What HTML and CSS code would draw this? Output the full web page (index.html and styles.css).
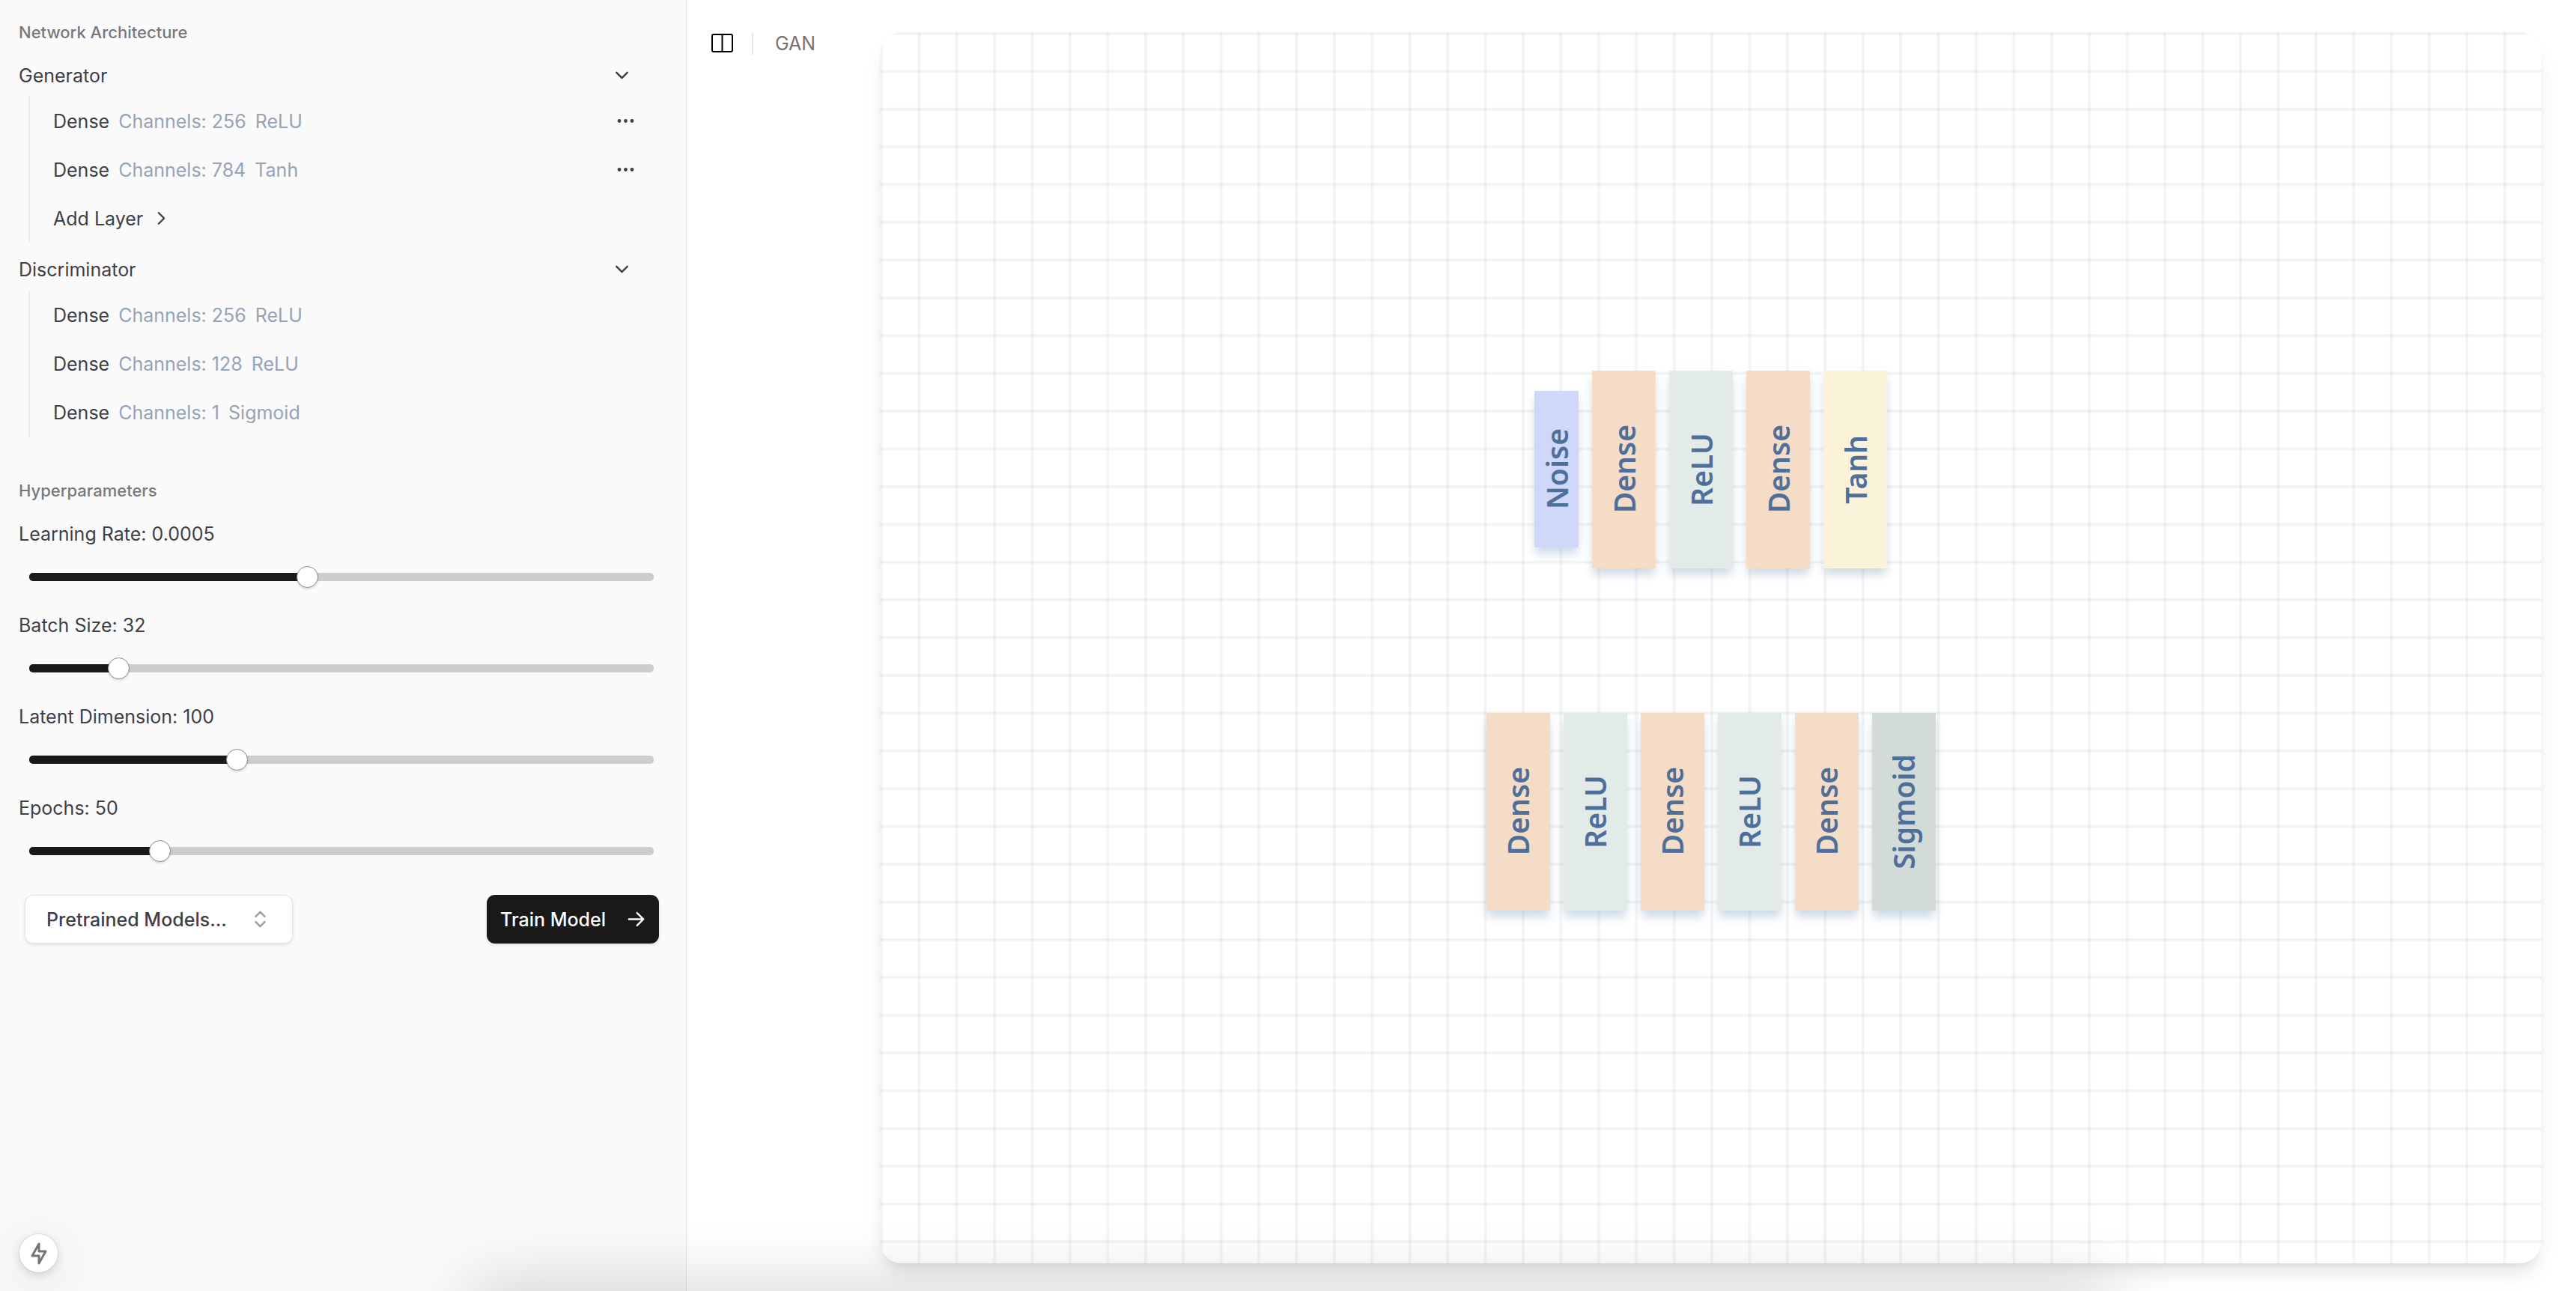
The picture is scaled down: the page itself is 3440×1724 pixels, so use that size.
FILE: index.html
```
<!DOCTYPE html>
<html lang="en">
<head>
<meta charset="utf-8">
<title>GAN</title>
<link rel="stylesheet" href="styles.css">
</head>
<body>
<div class="app">
  <aside class="sidebar">
    <section>
      <h2 class="group-title">Network Architecture</h2>
      <button class="tree-head" type="button">Generator
        <svg class="icon" viewBox="0 0 24 24"><path d="m6 9 6 6 6-6"/></svg>
      </button>
      <ul class="tree">
        <li class="layer"><span>Dense</span><span class="meta">Channels: 256</span><span class="meta">ReLU</span>
          <button class="more" type="button" aria-label="Layer options"><svg class="icon" viewBox="0 0 24 24"><circle cx="5" cy="12" r="1"/><circle cx="12" cy="12" r="1"/><circle cx="19" cy="12" r="1"/></svg></button></li>
        <li class="layer"><span>Dense</span><span class="meta">Channels: 784</span><span class="meta">Tanh</span>
          <button class="more" type="button" aria-label="Layer options"><svg class="icon" viewBox="0 0 24 24"><circle cx="5" cy="12" r="1"/><circle cx="12" cy="12" r="1"/><circle cx="19" cy="12" r="1"/></svg></button></li>
        <li class="layer"><button class="add" type="button">Add Layer
          <svg class="icon" viewBox="0 0 24 24"><path d="m9 18 6-6-6-6"/></svg></button></li>
      </ul>
      <button class="tree-head" type="button">Discriminator
        <svg class="icon" viewBox="0 0 24 24"><path d="m6 9 6 6 6-6"/></svg>
      </button>
      <ul class="tree">
        <li class="layer"><span>Dense</span><span class="meta">Channels: 256</span><span class="meta">ReLU</span></li>
        <li class="layer"><span>Dense</span><span class="meta">Channels: 128</span><span class="meta">ReLU</span></li>
        <li class="layer"><span>Dense</span><span class="meta">Channels: 1</span><span class="meta">Sigmoid</span></li>
      </ul>
    </section>
    <section class="params">
      <h2 class="group-title">Hyperparameters</h2>
      <div class="param">
        <label for="lr">Learning Rate: 0.0005</label>
        <input class="slider" id="lr" type="range" min="0" max="1000" value="443" style="--fill:44.3%">
      </div>
      <div class="param">
        <label for="batch">Batch Size: 32</label>
        <input class="slider" id="batch" type="range" min="0" max="1000" value="130" style="--fill:13%">
      </div>
      <div class="param">
        <label for="latent">Latent Dimension: 100</label>
        <input class="slider" id="latent" type="range" min="0" max="1000" value="327" style="--fill:32.7%">
      </div>
      <div class="param">
        <label for="epochs">Epochs: 50</label>
        <input class="slider" id="epochs" type="range" min="0" max="1000" value="199" style="--fill:19.9%">
      </div>
    </section>
    <div class="actions">
      <button class="models" type="button" aria-haspopup="listbox">Pretrained Models...
        <svg class="icon" viewBox="0 0 24 24"><path d="m7 15 5 5 5-5M7 9l5-5 5 5"/></svg>
      </button>
      <button class="train" type="button">Train Model
        <svg class="icon" viewBox="0 0 24 24"><path d="M4 12h16M13 5l7 7-7 7"/></svg>
      </button>
    </div>
  </aside>
  <main class="main">
    <header class="topbar">
      <button class="toggle" type="button" aria-label="Toggle sidebar">
        <svg viewBox="0 0 29 26"><rect x="1" y="1" width="27" height="23" rx="2"/><path d="M14.500 1v23"/></svg>
      </button>
      <span class="divider"></span>
      <span class="crumb">GAN</span>
    </header>
    <div class="canvas">
      <svg class="grid" viewBox="0 0 1233 913" preserveAspectRatio="xMinYMin slice" aria-hidden="true">
        <defs><pattern id="cell" width="28" height="28" patternUnits="userSpaceOnUse"><path class="grid-line" d="M0 0h28v2H0z"/><path class="grid-line" d="M0 0h2v28H0z"/></pattern></defs>
        <rect width="1233" height="1800" fill="url(#cell)"/>
      </svg>
      <div class="net">
        <div class="node noise"><span>Noise</span></div>
        <div class="node dense"><span>Dense</span></div>
        <div class="node relu"><span>ReLU</span></div>
        <div class="node dense"><span>Dense</span></div>
        <div class="node tanh"><span>Tanh</span></div>
      </div>
      <div class="net">
        <div class="node dense"><span>Dense</span></div>
        <div class="node relu"><span>ReLU</span></div>
        <div class="node dense"><span>Dense</span></div>
        <div class="node relu"><span>ReLU</span></div>
        <div class="node dense"><span>Dense</span></div>
        <div class="node sigmoid"><span>Sigmoid</span></div>
      </div>
    </div>
  </main>
</div>
<div class="dock-shadow"></div>
<button class="fab" type="button" aria-label="Quick actions">
  <svg viewBox="0 0 22 30"><path d="M11 2v10h9L11 28V18H2z"/></svg>
</button>
</body>
</html>
```
FILE: styles.css
```
* { box-sizing: border-box; }
body {
  margin: 0;
  font-family: Inter, "Liberation Sans", sans-serif;
  font-size: 25px;
  line-height: 36px;
  color: #3f3f46;
  background: #fff;
}
button {
  font: inherit;
  color: inherit;
  background: none;
  border: 0;
  padding: 0;
}
.app { display: flex; height: 100vh; overflow: hidden; }
.icon {
  width: 29px;
  height: 29px;
  flex: none;
  fill: none;
  stroke: currentColor;
  stroke-width: 2;
  stroke-linecap: round;
  stroke-linejoin: round;
}

.sidebar {
  flex: none;
  width: 917px;
  padding: 14px 36px 0 25px;
  background: #fafafa;
  border-right: 1px solid #e4e4e4;
}
.group-title {
  margin: 0;
  font-size: 22px;
  line-height: 58px;
  font-weight: 500;
  color: #78787c;
}
.tree-head {
  display: flex;
  width: 100%;
  height: 57px;
  padding-right: 35px;
  align-items: center;
  justify-content: space-between;
}
.tree {
  list-style: none;
  margin: 0 0 7px 13px;
  padding: 0 0 0 31px;
  border-left: 2px solid #ebebeb;
}
.layer {
  display: flex;
  align-items: center;
  gap: 12px;
  height: 65px;
}
.meta { color: #94a3b8; }
.more { display: flex; margin-left: auto; padding-right: 30px; }
.add { display: flex; align-items: center; gap: 10px; }

.params { padding-top: 36px; }
.param { height: 122px; padding-top: 11px; }
.param label { display: block; }
.slider {
  -webkit-appearance: none;
  appearance: none;
  display: block;
  width: 834px;
  height: 29px;
  margin: 25px 0 0 14px;
  background: none;
}
.slider::-webkit-slider-runnable-track {
  height: 11px;
  border-radius: 5px;
  background: linear-gradient(#1a1917, #1a1917) 0 0 / var(--fill) 100% no-repeat, #cdcdcd;
}
.slider::-webkit-slider-thumb {
  -webkit-appearance: none;
  width: 29px;
  height: 29px;
  margin-top: -9px;
  border: 1px solid #8b8b8b;
  border-radius: 50%;
  background: #fff;
  box-shadow: 0 2px 3px rgb(0 0 0 / 12%);
}
.actions {
  display: flex;
  justify-content: space-between;
  padding: 23px 0 0 8px;
}
.models, .train {
  display: flex;
  align-items: center;
  justify-content: space-between;
  height: 65px;
  border-radius: 11px;
  font-weight: 500;
  box-shadow: 0 2px 4px rgb(0 0 0 / 10%);
}
.models {
  width: 358px;
  padding: 0 28px;
  background: #fff;
  border: 1px solid #e4e4e7;
}
.models .icon { color: #9c9c9c; }
.train {
  width: 230px;
  padding: 0 16px 0 18px;
  background: #1a1917;
  color: #fff;
}

.main { flex: 1; display: flex; padding: 43px 46px 37px 33px; }
.topbar { flex: none; width: 225px; display: flex; height: 30px; align-items: center; }
.toggle { display: flex; }
.toggle svg { width: 29px; height: 26px; fill: none; stroke: #000; stroke-width: 2; }
.divider { width: 2px; height: 29px; margin: 0 29px 0 25px; background: #e5e5e5; }
.crumb { color: #78716c; }
.canvas {
  position: relative;
  flex: 1;
  display: flex;
  flex-direction: column;
  align-items: center;
  justify-content: center;
  gap: 193px;
  padding-bottom: 20px;
  border-radius: 29px;
  background: #fff;
  box-shadow: 0 18px 27px -5px rgb(0 0 0 / 10%), 0 7px 11px -7px rgb(0 0 0 / 10%);
}
.grid {
  position: absolute;
  inset: 0;
  width: 100%;
  height: 100%;
  border-radius: 29px;
}
.grid-line { fill: #000; fill-opacity: .045; }
.net { position: relative; display: flex; align-items: center; gap: 18px; }
.node {
  display: flex;
  align-items: center;
  justify-content: center;
  width: 85px;
  height: 264px;
  font: 600 39px/54px "Noto Sans", sans-serif;
  color: #4f6f9b;
  box-shadow: 0 11px 11px -2px rgb(70 120 160 / 20%), 0 4px 14px rgb(70 120 180 / 10%);
}
.node span { writing-mode: vertical-rl; transform: rotate(180deg); }
.noise { width: 59px; height: 209px; background: #d0d8fa; }
.dense { background: #f4dcc6; }
.relu { background: #e2ebe7; }
.tanh { background: #faf3da; }
.sigmoid { background: #d2dbd7; }

.dock-shadow {
  position: fixed;
  left: 630px;
  right: 620px;
  bottom: -60px;
  height: 60px;
  box-shadow: 0 0 90px rgb(0 0 0 / 22%);
  pointer-events: none;
}
.fab {
  position: fixed;
  left: 26px;
  bottom: 25px;
  display: grid;
  place-items: center;
  width: 51px;
  height: 51px;
  border-radius: 50%;
  background: #fff;
  box-shadow: 0 0 0 1px rgb(0 0 0 / 8%), 0 4px 14px rgb(0 0 0 / 14%), 0 14px 80px rgb(0 0 0 / 16%);
}
.fab svg { width: 22px; height: 30px; fill: none; stroke: #757575; stroke-width: 3; stroke-linejoin: round; }
```
